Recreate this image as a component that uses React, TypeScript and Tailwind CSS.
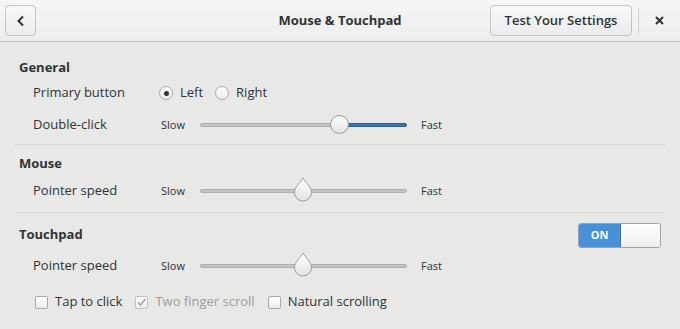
import React from 'react';

const font = { fontFamily: '"Open Sans", "Noto Sans", sans-serif' };

function Radio({ checked, label }: { checked?: boolean; label: string }) {
  return (
    <div className="flex items-center">
      <span className="w-[14px] h-[14px] rounded-full border border-[#a8a8a8] bg-gradient-to-b from-white to-[#ececec] flex items-center justify-center">
        {checked && <span className="w-[5px] h-[5px] rounded-full bg-[#2e3436]" />}
      </span>
      <span className="ml-[7px] text-[13px] text-[#2e3436]">{label}</span>
    </div>
  );
}

function Check({ checked, disabled, label }: { checked?: boolean; disabled?: boolean; label: string }) {
  return (
    <div className="flex items-center">
      <span
        className={`w-[13px] h-[13px] rounded-[2px] border bg-gradient-to-b from-white to-[#ececec] flex items-center justify-center ${
          disabled ? 'border-[#c0c0c0]' : 'border-[#a8a8a8]'
        }`}
      >
        {checked && (
          <svg width="11" height="11" viewBox="0 0 11 11">
            <path d="M2 5.5 L4.5 8 L9.5 2" fill="none" stroke={disabled ? '#9a9a9a' : '#2e3436'} strokeWidth="1.4" />
          </svg>
        )}
      </span>
      <span className={`ml-[7px] text-[13px] ${disabled ? 'text-[#9a9c9a]' : 'text-[#2e3436]'}`}>{label}</span>
    </div>
  );
}

function Slider({ value, fill, drop }: { value: number; fill?: boolean; drop?: boolean }) {
  const left = value; // px from track start to thumb center
  return (
    <div className="flex items-center">
      <span className="w-[39px] text-[11px] text-[#2e3436]">Slow</span>
      <div className="relative w-[207px] h-[4px]">
        <div className="absolute inset-0 rounded-full bg-[#c4c4c4] border border-[#aeaeae]" />
        {fill && (
          <div
            className="absolute top-0 bottom-0 right-0 rounded-full bg-[#3b73af] border border-[#2f5f94]"
            style={{ left: left }}
          />
        )}
        {drop ? (
          <svg
            width="20"
            height="25"
            viewBox="0 0 20 25"
            className="absolute"
            style={{ left: left - 10, top: -12 }}
          >
            <defs>
              <linearGradient id="dg" x1="0" y1="0" x2="0" y2="1">
                <stop offset="0" stopColor="#ffffff" />
                <stop offset="1" stopColor="#e2e2e2" />
              </linearGradient>
            </defs>
            <path
              d="M10 1 C 12.5 5.5, 18.5 10, 18.5 15.5 A 8.5 8.5 0 0 1 1.5 15.5 C 1.5 10, 7.5 5.5, 10 1 Z"
              fill="url(#dg)"
              stroke="#9c9c9c"
              strokeWidth="1"
            />
          </svg>
        ) : (
          <span
            className="absolute w-[19px] h-[19px] rounded-full border border-[#9c9c9c] bg-gradient-to-b from-white to-[#e2e2e2]"
            style={{ left: left - 9.5, top: -8 }}
          />
        )}
      </div>
      <span className="ml-[14px] text-[11px] text-[#2e3436]">Fast</span>
    </div>
  );
}

function Row({ label, h, children }: { label: string; h: string; children: React.ReactNode }) {
  return (
    <div className={`flex items-center pl-[18px] ${h}`}>
      <span className="w-[128px] text-[13px] text-[#2e3436]">{label}</span>
      {children}
    </div>
  );
}

export default function App() {
  return (
    <div className="w-[680px] h-[329px] bg-[#e8e8e7] overflow-hidden" style={font}>
      {/* header bar */}
      <div className="h-[42px] flex items-center bg-gradient-to-b from-[#f6f6f6] to-[#ededed] border-b border-[#bdbdbd]">
        <button className="ml-[5px] w-[31px] h-[31px] rounded-[4px] border border-[#c4c4c4] bg-gradient-to-b from-[#f8f8f8] to-[#ececec] flex items-center justify-center">
          <svg width="10" height="12" viewBox="0 0 10 12">
            <path d="M7 1.5 L2.5 6 L7 10.5" fill="none" stroke="#2e3436" strokeWidth="2" />
          </svg>
        </button>
        <div className="flex-1 text-center text-[13px] font-bold text-[#2e3436] pl-[154px]">Mouse &amp; Touchpad</div>
        <button className="w-[142px] h-[31px] rounded-[4px] border border-[#c4c4c4] bg-gradient-to-b from-[#f8f8f8] to-[#ececec] text-[13px] text-[#2e3436] font-semibold">
          Test Your Settings
        </button>
        <div className="ml-[6px] w-px h-[26px] bg-[#cfcfcf]" />
        <div className="w-[41px] flex justify-center">
          <svg width="9" height="9" viewBox="0 0 9 9">
            <path d="M1 1 L8 8 M8 1 L1 8" stroke="#2e3436" strokeWidth="2" />
          </svg>
        </div>
      </div>

      <div className="px-[15px]">
        {/* General */}
        <div className="mt-[16px] h-[20px] flex items-center pl-[4px] text-[13px] font-bold text-[#2e3436]">General</div>
        <Row label="Primary button" h="h-[30px]">
          <div className="flex items-center gap-[12px] -ml-[2px]">
            <Radio checked label="Left" />
            <Radio label="Right" />
          </div>
        </Row>
        <Row label="Double-click" h="h-[34px]">
          <Slider value={139} fill />
        </Row>
        <div className="mt-[2px] h-px bg-[#d6d6d6]" />

        {/* Mouse */}
        <div className="mt-[9px] h-[20px] flex items-center pl-[4px] text-[13px] font-bold text-[#2e3436]">Mouse</div>
        <Row label="Pointer speed" h="h-[34px]">
          <Slider value={103} drop />
        </Row>
        <div className="mt-[4px] h-px bg-[#d6d6d6]" />

        {/* Touchpad */}
        <div className="mt-[12px] h-[20px] flex items-center justify-between pl-[4px]">
          <span className="text-[13px] font-bold text-[#2e3436]">Touchpad</span>
          <div className="mr-[4px] w-[83px] h-[25px] rounded-[3px] border border-[#a1a1a1] flex overflow-hidden">
            <div className="w-[42px] bg-[#4a90d9] border-r border-[#3a75b3] flex items-center justify-center text-[11px] font-bold text-white">
              ON
            </div>
            <div className="flex-1 bg-gradient-to-b from-white to-[#ededed]" />
          </div>
        </div>
        <Row label="Pointer speed" h="h-[42px]">
          <Slider value={103} drop />
        </Row>
        <div className="h-[30px] flex items-center pl-[20px] gap-[13px]">
          <Check label="Tap to click" />
          <Check checked disabled label="Two finger scroll" />
          <Check label="Natural scrolling" />
        </div>
      </div>
    </div>
  );
}
